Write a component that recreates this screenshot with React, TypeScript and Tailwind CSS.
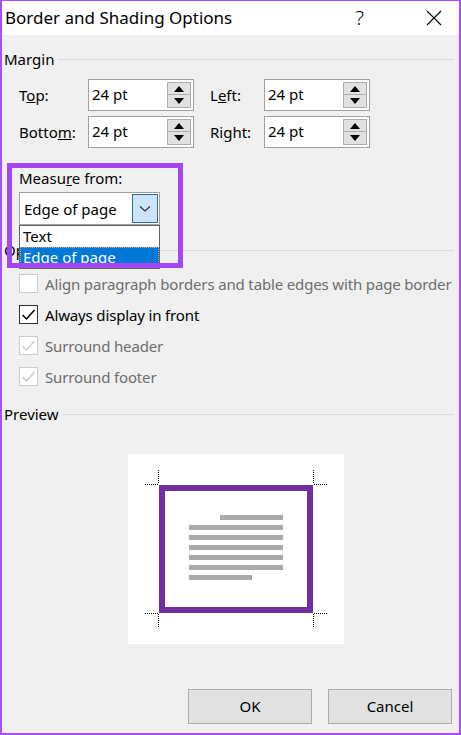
import React from 'react'

const font = { fontFamily: '"Noto Sans", "Open Sans", sans-serif' }

function Spinner() {
  return (
    <div className="absolute right-[2px] top-[2px] flex h-[26px] w-[24px] flex-col border border-[#adadad] bg-[#e1e1e1]">
      <div className="flex h-1/2 items-center justify-center border-b border-[#adadad]">
        <svg width="10" height="6" viewBox="0 0 10 6">
          <path d="M0 6 L5 0 L10 6 Z" fill="#000" />
        </svg>
      </div>
      <div className="flex h-1/2 items-center justify-center">
        <svg width="10" height="6" viewBox="0 0 10 6">
          <path d="M0 0 L5 6 L10 0 Z" fill="#000" />
        </svg>
      </div>
    </div>
  )
}

function NumberBox() {
  return (
    <div className="relative h-[32px] w-[106px] border border-[#a0a0a0] bg-white">
      <span className="absolute left-[3px] top-[4px] text-[15px] leading-5 text-black">24 pt</span>
      <Spinner />
    </div>
  )
}

function Label({ children, w }: { children: React.ReactNode; w: string }) {
  return <div className={`${w} text-[15px] leading-5 text-black`}>{children}</div>
}

function Header({ title, lineStart }: { title: string; lineStart: string }) {
  return (
    <div className="flex h-[20px] items-center">
      <span className="pl-[1px] text-[15px] leading-5 text-black">{title}</span>
      <div className={`ml-auto h-px ${lineStart} bg-[#dadada]`} />
    </div>
  )
}

function Check({ label, checked, disabled }: { label: string; checked?: boolean; disabled?: boolean }) {
  const border = disabled ? 'border-[#cccccc]' : 'border-[#333333]'
  const mark = disabled ? '#cccccc' : '#000000'
  return (
    <div className="flex h-[31px] items-center pl-[16px]">
      <div className={`flex h-[19px] w-[19px] shrink-0 items-center justify-center border ${border} bg-white`}>
        {checked && (
          <svg width="15" height="15" viewBox="0 0 15 15">
            <path d="M1.5 8 L5.5 12 L13.5 3" fill="none" stroke={mark} strokeWidth="1.5" />
          </svg>
        )}
      </div>
      <span
        className={`ml-[7px] whitespace-nowrap text-[15px] leading-5 tracking-[-0.15px] ${disabled ? 'text-[#6d6d6d]' : 'text-black'}`}
      >
        {label}
      </span>
    </div>
  )
}

function Preview() {
  const dots = '#000'
  return (
    <svg width="216" height="190" viewBox="0 0 216 190" className="block">
      <rect x="0" y="0" width="216" height="190" fill="#fff" />
      <rect x="34" y="34" width="148" height="122" fill="none" stroke="#7030a0" strokeWidth="6" />
      <rect x="92" y="61" width="63" height="5" fill="#aaaaaa" />
      {[71, 81, 91, 101, 111].map((y) => (
        <rect key={y} x="61" y={y} width="94" height="5" fill="#aaaaaa" />
      ))}
      <rect x="61" y="121" width="63" height="5" fill="#aaaaaa" />
      <g stroke={dots} strokeWidth="1" strokeDasharray="1 1">
        <line x1="30.5" y1="16" x2="30.5" y2="30" />
        <line x1="17" y1="30.5" x2="30" y2="30.5" />
        <line x1="185.5" y1="16" x2="185.5" y2="30" />
        <line x1="186" y1="30.5" x2="200" y2="30.5" />
        <line x1="30.5" y1="160" x2="30.5" y2="174" />
        <line x1="17" y1="159.5" x2="30" y2="159.5" />
        <line x1="185.5" y1="160" x2="185.5" y2="174" />
        <line x1="186" y1="159.5" x2="200" y2="159.5" />
      </g>
    </svg>
  )
}

export default function App() {
  return (
    <div style={font} className="flex h-[735px] w-[461px] flex-col border-x-2 border-b-2 border-t border-[#a64dff] bg-[#f0f0f0]">
      {/* title bar */}
      <div className="flex h-[34px] items-center bg-white">
        <span className="ml-[3px] text-[17px] leading-6 text-black">Border and Shading Options</span>
        <span className="ml-auto text-[20px] leading-6 font-light text-black">?</span>
        <svg width="16" height="16" viewBox="0 0 16 16" className="ml-[62px] mr-[17px]">
          <path d="M1 1 L15 15 M15 1 L1 15" stroke="#000" strokeWidth="1.1" />
        </svg>
      </div>

      <div className="relative flex flex-1 flex-col pl-px pr-[5px]">
        <div className="mt-[14px]">
          <Header title="Margin" lineStart="w-[396px]" />
        </div>

        <div className="mt-[10px] flex flex-col gap-[5px] pl-[16px]">
          <div className="flex items-center">
            <Label w="w-[69px]">T<u>o</u>p:</Label>
            <NumberBox />
            <div className="w-[16px]" />
            <Label w="w-[54px]">L<u>e</u>ft:</Label>
            <NumberBox />
          </div>
          <div className="flex items-center">
            <Label w="w-[69px]">Botto<u>m</u>:</Label>
            <NumberBox />
            <div className="w-[16px]" />
            <Label w="w-[54px]">Right:</Label>
            <NumberBox />
          </div>
        </div>

        <div className="mt-[20px] pl-[16px] text-[15px] leading-5 text-black">
          Measu<u>r</u>e from:
        </div>
        <div className="relative ml-[16px] mt-[4px] flex h-[33px] w-[141px] items-center border border-[#a0a0a0] bg-white">
          <span className="ml-[4px] text-[15px] leading-5 text-black">Edge of page</span>
          <div className="absolute right-[1px] top-[1px] flex h-[29px] w-[26px] items-center justify-center border border-[#2a6ab0] bg-[#cce4f7]">
            <svg width="12" height="8" viewBox="0 0 12 8">
              <path d="M1 1.5 L6 6 L11 1.5" fill="none" stroke="#333" strokeWidth="1.1" />
            </svg>
          </div>
          {/* open list */}
          <div className="absolute left-[-1px] top-[32px] z-10 w-[141px] border border-[#646464] bg-white">
            <div className="h-[21px] pl-[3px] text-[15px] leading-5 text-black">Text</div>
            <div className="h-[21px] border border-dotted border-[#f0a060] bg-[#0078d7] pl-[2px] text-[15px] leading-[18px] text-white">
              Edge of page
            </div>
          </div>
        </div>

        <div className="mt-[15px]">
          <Header title="Options" lineStart="w-[396px]" />
        </div>

        <div className="mt-[8px]">
          <Check label="Align paragraph borders and table edges with page border" disabled />
          <Check label="Always display in front" checked />
          <Check label="Surround header" checked disabled />
          <Check label="Surround footer" checked disabled />
        </div>

        <div className="mt-[12px]">
          <Header title="Preview" lineStart="w-[391px]" />
        </div>

        <div className="ml-[125px] mt-[30px]">
          <Preview />
        </div>

        <div className="mt-[45px] flex justify-end gap-[16px] pr-[2px]">
          <button className="h-[35px] w-[124px] border border-[#adadad] bg-[#e1e1e1] text-[15px] text-black">OK</button>
          <button className="h-[35px] w-[124px] border border-[#adadad] bg-[#e1e1e1] text-[15px] text-black">Cancel</button>
        </div>

        {/* highlight annotation */}
        <div className="pointer-events-none absolute left-[5px] top-[128px] z-20 h-[105px] w-[176px] border-[5px] border-[#a445f7]" />
      </div>
    </div>
  )
}
